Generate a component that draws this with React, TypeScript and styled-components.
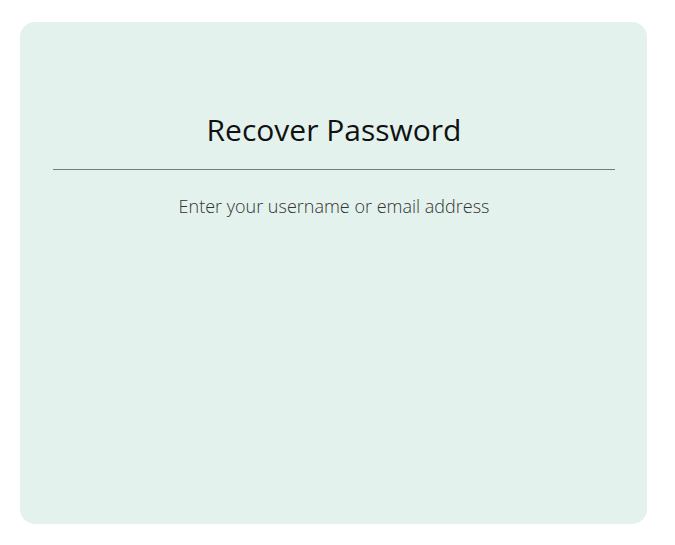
import styled, { createGlobalStyle } from "styled-components";

const GlobalStyle = createGlobalStyle`
  body {
    margin: 0;
    background: #ffffff;
    font-family: "Open Sans", "Liberation Sans", sans-serif;
  }
`;

const Page = styled.div`
  padding: 22px 28px 21px 20px;
`;

const Card = styled.div`
  height: 502px;
  background-color: #e3f2ed;
  border-radius: 15px;
  padding: 0 32px 0 33px;
  box-sizing: border-box;
  display: flex;
  flex-direction: column;
  align-items: stretch;
`;

const Title = styled.h1`
  margin: 0;
  padding: 88px 0 19px;
  font-size: 30px;
  font-weight: 400;
  color: #111111;
  text-align: center;
  line-height: 40px;
  border-bottom: 1px solid #7a7a7a;
`;

const Subtitle = styled.p`
  margin: 22px 0 0;
  font-size: 18px;
  font-weight: 300;
  color: #333333;
  text-align: center;
  line-height: 28px;
`;

export default function App() {
  return (
    <>
      <GlobalStyle />
      <Page>
        <Card>
          <Title>Recover Password</Title>
          <Subtitle>Enter your username or email address</Subtitle>
        </Card>
      </Page>
    </>
  );
}
